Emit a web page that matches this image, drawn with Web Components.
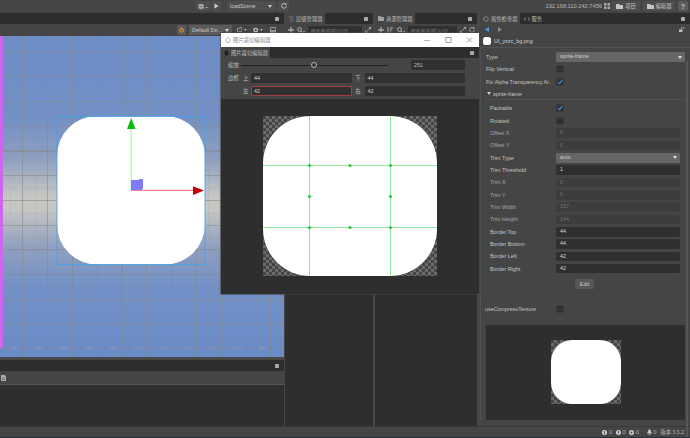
<!DOCTYPE html>
<html>
<head>
<meta charset="utf-8">
<title>Editor</title>
<style>
    html, body { margin: 0; height: 100%; overflow: hidden; background: #454545; }
    body { font: 5.4px "Liberation Sans", "Noto Sans CJK SC", sans-serif; color: #c8c8c8; }
</style>
</head>
<body>
<editor-app></editor-app>

<script>
const CJK = '"Noto Sans CJK SC", "Liberation Sans", sans-serif';
const MENU_DOT = `<span style="display:block;width:4px;height:4px;background:#a8a8a8;border-radius:.5px"></span>`;

// tab strip with the little panel menu square at the right
class PanelTabs extends HTMLElement {
    constructor() {
        super();
        this.attachShadow({ mode: 'open' });
    }
    connectedCallback() {
        this.shadowRoot.innerHTML = `
            <style>
                :host { display: flex; height: 11px; background: #2d2d2d; align-items: stretch; flex: none; }
                .tabs { display: flex; flex: 1; gap: 1px; min-width: 0; }
                .menu { width: 15px; display: flex; align-items: center; justify-content: center; }
            </style>
            <div class="tabs"><slot></slot></div>
            <div class="menu">${MENU_DOT}</div>
        `;
    }
}

class PanelTab extends HTMLElement {
    constructor() {
        super();
        this.attachShadow({ mode: 'open' });
    }
    connectedCallback() {
        this.shadowRoot.innerHTML = `
            <style>
                :host {
                    display: flex; align-items: center; gap: 2px; padding: 0 2px 0 3px;
                    font: 5.3px ${CJK}; color: #bdbdbd; white-space: nowrap;
                }
                :host([active]) { background: #454545; }
                svg { width: 6px; height: 6px; flex: none; }
            </style>
            <slot name="icon"></slot><slot></slot>
        `;
    }
}

class ToolButton extends HTMLElement {
    constructor() {
        super();
        this.attachShadow({ mode: 'open' });
    }
    connectedCallback() {
        this.shadowRoot.innerHTML = `
            <style>
                :host {
                    display: inline-flex; align-items: center; justify-content: center; gap: 2px;
                    height: 10px; padding: 0 2px; box-sizing: border-box; border-radius: 1px;
                    background: #4e4e4e; color: #c4c4c4; white-space: nowrap; flex: none;
                }
                :host([flat]) { background: none; }
            </style>
            <slot></slot>
        `;
    }
}

class TopBar extends HTMLElement {
    constructor() {
        super();
        this.attachShadow({ mode: 'open' });
    }
    connectedCallback() {
        this.shadowRoot.innerHTML = `
            <style>
                :host { display: flex; align-items: center; height: 12px; padding-right: 2px; background: #454545; flex: none; }
                .play { display: flex; gap: 2px; margin-left: 196px; align-items: center; }
                .scene { width: 49px; justify-content: space-between; padding: 0 4px 0 3px; }
                .addr { margin-left: auto; color: #b8b8b8; font-size: 5.7px; }
                .qr { margin: 0 2px 0 2px; }
                .cjk { font: 5.3px ${CJK}; }
                .b1 { width: 28px; }
                .b2 { width: 32px; margin-left: 3px; }
                .help { width: 10px; height: 10px; margin-left: 3px; padding: 0; border-radius: 2px; background: #5c5c5c; font-weight: bold; font-size: 7px; }
            </style>
            <div class="play">
                <tool-button style="width:14px">
                    <svg width="11" height="7" viewBox="0 0 11 7"><circle cx="3.5" cy="3.5" r="3" fill="#b5b5b5"/><path d="M.5 3.5h6M3.5.5v6" stroke="#666" stroke-width=".6"/><path d="M8 4h3L9.500 5.500z" fill="#c4c4c4"/></svg>
                </tool-button>
                <tool-button style="width:9px">
                    <svg width="5" height="6" viewBox="0 0 5 6"><path d="M0.500 0.500 4.500 3 0.500 5.500z" fill="#d0d0d0"/></svg>
                </tool-button>
                <span style="width:2px"></span>
                <tool-button class="scene">
                    <span>loadScene</span>
                    <svg width="4" height="3" viewBox="0 0 4 3"><path d="M0 0h4L2 3z" fill="#ccc"/></svg>
                </tool-button>
                <tool-button style="width:11px">
                    <svg width="6" height="6" viewBox="0 0 6 6"><path d="M5 1.500A2.400 2.400 0 1 0 5.400 3" fill="none" stroke="#c8c8c8" stroke-width=".9"/><path d="M5.500 0v2h-2z" fill="#c8c8c8"/></svg>
                </tool-button>
            </div>
            <span class="addr">192.168.110.242:7456</span>
            <svg class="qr" width="6" height="6" viewBox="0 0 6 6"><path d="M0 0h2.500v2.500H0zM3.500 0H6v2.500H3.500zM0 3.500h2.500V6H0zM3.500 3.500H6V6H3.500z" fill="#aaa"/></svg>
            <tool-button class="b1">
                <svg width="7" height="5" viewBox="0 0 7 5"><path d="M0 0h3l1 1h3v4H0z" fill="#c4c4c4"/></svg>
                <span class="cjk">项目</span>
            </tool-button>
            <tool-button class="b2">
                <svg width="7" height="5" viewBox="0 0 7 5"><path d="M0 0h3l1 1h3v4H0z" fill="#c4c4c4"/></svg>
                <span class="cjk">编辑器</span>
            </tool-button>
            <tool-button class="help">?</tool-button>
        `;
    }
}

// the viewport with grid, sprite and transform gizmo
class SceneView extends HTMLElement {
    constructor() {
        super();
        this.attachShadow({ mode: 'open' });
    }
    connectedCallback() {
        const marks = ['500', '600', '800', '900', '1000', '1100', '1200', '1300', '1400', '1500', '1600'];
        this.shadowRoot.innerHTML = `
            <style>
                :host { display: block; position: relative; flex: 1; overflow: hidden; background: linear-gradient(#6d8dc8 0%, #7290c6 25%, #8d9fc0 38%, #c6c6c3 50%, #c6c6c3 54%, #8f9fbf 66%, #7391c7 78%, #698bc8 100%); }
                .grid { position: absolute; inset: 0; background:
                    repeating-linear-gradient(90deg, transparent 0 22.500px, rgba(135,135,135,.5) 22.500px 23.500px, transparent 23.500px 24.750px),
                    repeating-linear-gradient(180deg, transparent 0 15.500px, rgba(135,135,135,.5) 15.500px 16.500px, transparent 16.500px 24.750px),
                    repeating-linear-gradient(90deg, transparent 0 10.100px, rgba(140,140,140,.12) 10.100px 11.100px, transparent 11.100px 12.375px),
                    repeating-linear-gradient(180deg, transparent 0 3.300px, rgba(140,140,140,.12) 3.300px 4.300px, transparent 4.300px 12.375px); }
                .edge { position: absolute; left: 0; top: 0; width: 3px; height: 312px; background: #cf66f0; }
                .marks { position: absolute; left: 2px; top: 310px; display: flex; font-size: 3.800px; color: #93a0bb; }
                .marks span { width: 24.750px; text-align: center; }
                svg { position: absolute; left: 0; top: 0; }
            </style>
            <div class="grid"></div>
            <div class="edge"></div>
            <div class="marks">${marks.map(m => `<span>${m}</span>`).join('')}</div>
            <svg width="284" height="321" viewBox="0 36 284 321">
                <rect x="57" y="116" width="148" height="148.500" rx="40" fill="#fff"/>
                <rect x="57" y="116.500" width="148" height="148" fill="none" stroke="#45a4ea" stroke-width=".9"/>
                <path d="M131.200 128V190" stroke="#9af09a" stroke-width="1"/>
                <path d="M131.200 118 135.500 129H127z" fill="#0cba0c"/>
                <path d="M131 190.300H194" stroke="#f26464" stroke-width="1"/>
                <path d="M204 190.500 193 186.200V195z" fill="#c00606"/>
                <path d="M131 180h8v-1h4v10h-1v1h-11z" fill="#7c7cf6"/>
            </svg>
        `;
    }
}

class ScenePanel extends HTMLElement {
    constructor() {
        super();
        this.attachShadow({ mode: 'open' });
    }
    connectedCallback() {
        this.shadowRoot.innerHTML = `
            <style>
                :host { display: flex; flex-direction: column; min-height: 0; }
                .tools { display: flex; align-items: center; justify-content: flex-end; height: 12px; padding-right: 8px; box-sizing: border-box; background: #454545; flex: none; }
                .sel { width: 43px; justify-content: space-between; padding: 0 3px; margin: 0 5px 0 3px; background: #5b5b5b; color: #c8c8c8; }
                .orange { width: 9px; background: #5a5a5a; }
                .log-tabs { margin-top: 3px; }
                .log-tools { height: 14px; background: #454545; border-bottom: 1px solid #555; box-sizing: border-box; display: flex; align-items: center; flex: none; }
                .log { height: 41px; background: #2e2e2e; flex: none; }
            </style>
            <panel-tabs></panel-tabs>
            <div class="tools">
                <tool-button class="orange">
                    <svg width="6" height="6" viewBox="0 0 6 6"><circle cx="3" cy="3.400" r="2.200" fill="none" stroke="#f09a2c" stroke-width="1.200"/><path d="M3 0v2.400" stroke="#f09a2c" stroke-width="1"/></svg>
                </tool-button>
                <tool-button class="sel">
                    <span>Default De...</span>
                    <svg width="4" height="3" viewBox="0 0 4 3"><path d="M0 0h4L2 3z" fill="#d0d0d0"/></svg>
                </tool-button>
                <tool-button flat style="width:10px;padding:0;margin-right:6px">
                    <svg width="6" height="6" viewBox="0 0 6 6"><path d="M.5 1.500h2l.5-1h2.500v4.500H.5z" fill="none" stroke="#bbb" stroke-width=".8"/></svg>
                    <svg width="3" height="2" viewBox="0 0 3 2"><path d="M0 0h3L1.500 2z" fill="#bbb"/></svg>
                </tool-button>
                <tool-button flat style="width:10px;padding:0;margin-right:7px">
                    <svg width="6" height="6" viewBox="0 0 6 6"><circle cx="3" cy="3" r="2" fill="none" stroke="#d0d0d0" stroke-width="1.300"/></svg>
                    <svg width="3" height="2" viewBox="0 0 3 2"><path d="M0 0h3L1.500 2z" fill="#bbb"/></svg>
                </tool-button>
                <tool-button flat style="width:6px;padding:0">
                    <svg width="6" height="6" viewBox="0 0 6 6"><rect width="6" height="6" rx="1" fill="#9a9a9a"/><rect x="1" y="1" width="4" height="2" fill="#454545"/></svg>
                </tool-button>
            </div>
            <scene-view></scene-view>
            <panel-tabs class="log-tabs"></panel-tabs>
            <div class="log-tools">
                <svg width="5" height="6" viewBox="0 0 5 6" style="margin-left:1px"><path d="M0 0h3.500L5 1.500V6H0z" fill="#b0b0b0"/><path d="M1 3h3M1 4.500h3" stroke="#555" stroke-width=".6"/></svg>
            </div>
            <div class="log"></div>
        `;
    }
}

// hierarchy and assets column: tabs, a toolbar with search, an empty list
class ListPanel extends HTMLElement {
    constructor() {
        super();
        this.attachShadow({ mode: 'open' });
    }
    connectedCallback() {
        this.shadowRoot.innerHTML = `
            <style>
                :host { display: flex; flex-direction: column; min-height: 0; }
                .tools { display: flex; align-items: center; height: 12px; gap: 3px; padding: 0 2px 0 3px; background: #454545; box-sizing: border-box; flex: none; color: #c8c8c8; }
                .list { flex: 1; background: #2e2e2e; }
            </style>
            <panel-tabs><slot name="tab"></slot></panel-tabs>
            <div class="tools"><slot name="tools"></slot></div>
            <div class="list"></div>
        `;
    }
}

class CheckMark extends HTMLElement {
    constructor() {
        super();
        this.attachShadow({ mode: 'open' });
    }
    connectedCallback() {
        this.shadowRoot.innerHTML = `
            <style>
                :host { display: block; width: 6px; height: 6px; border-radius: 1.500px; background: #303030; border: .5px solid #3a3a3a; flex: none; position: relative; }
                svg { position: absolute; left: 0; top: 0; }
            </style>
            ${this.hasAttribute('on') ? `<svg width="6" height="6" viewBox="0 0 6 6"><path d="M1 3.200 2.500 4.700 5.300 1" fill="none" stroke="#3d8ee8" stroke-width="1.200"/></svg>` : ''}
        `;
    }
}

// inspector row: label on the left, a field, select or checkbox on the right
class PropRow extends HTMLElement {
    constructor() {
        super();
        this.attachShadow({ mode: 'open' });
    }
    connectedCallback() {
        const kind = this.getAttribute('kind');
        const value = this.getAttribute('value') || '';
        let control = `<span class="box ${kind}">${value}</span>`;
        if (kind === 'check') {
            control = `<check-mark ${value ? 'on' : ''}></check-mark>`;
        } else if (kind === 'select') {
            control = `<span class="box select"><span>${value}</span><svg width="4" height="3" viewBox="0 0 4 3"><path d="M0 0h4L2 3z" fill="#e0e0e0"/></svg></span>`;
        }
        this.shadowRoot.innerHTML = `
            <style>
                :host { display: flex; align-items: center; height: 12.330px; }
                .label { width: var(--label-w, 70px); flex: none; white-space: nowrap; overflow: hidden; color: #c4c4c4; }
                :host([kind="off"]) .label { color: #a8a8a8; }
                .box { flex: 1; height: 9.500px; line-height: 9.500px; padding: 0 4px; border-radius: 1.500px; box-sizing: border-box; }
                .on { background: #2f2f2f; color: #d8d8d8; }
                .off { background: #3d3d3d; color: #757575; }
                .select { background: #666; color: #cfcfcf; display: flex; justify-content: space-between; align-items: center; padding-right: 3px; }
            </style>
            <span class="label"><slot></slot></span>
            ${control}
        `;
    }
}

class InspectorPanel extends HTMLElement {
    constructor() {
        super();
        this.attachShadow({ mode: 'open' });
    }
    connectedCallback() {
        this.shadowRoot.innerHTML = `
            <style>
                :host { display: flex; flex-direction: column; min-height: 0; background: #454545; position: relative; }
                .nav { display: flex; align-items: center; height: 11px; padding: 0 5px 0 5px; gap: 9px; flex: none; }
                .file { display: flex; align-items: center; gap: 3px; height: 12px; padding-left: 3px; flex: none; color: #d0d0d0; }
                .thumb { width: 8px; height: 8px; background: #fff; border-radius: 2.500px; }
                .body { border-left: 1px solid #525252; border-top: 1px solid #525252; padding: 3px 5px 0 5px; flex: none; }
                .group-head { display: flex; align-items: center; gap: 2px; height: 12.330px; padding-left: 1px; border-bottom: .5px solid #505050; box-sizing: border-box; }
                .group { --label-w: 66px; padding: 2px 5px 0 4px; }
                .edit { display: flex; justify-content: center; padding: 4.500px 0 0 0; margin-left: -1px; }
                .edit span { width: 19px; height: 10px; line-height: 10px; text-align: center; background: #575757; border-radius: 1px; color: #c8c8c8; }
                .compress { margin-top: 13px; margin-left: -1px; --label-w: 71px; }
                .preview { margin: 10px 0 0 0; height: 95px; background: #2e2e2e; display: flex; align-items: center; justify-content: center; }
                .bar { position: absolute; right: 2px; top: 48px; width: 2px; height: 376px; background: #565656; }
            </style>
            <panel-tabs>
                <panel-tab active>
                    <svg slot="icon" width="6" height="6" viewBox="0 0 6 6"><circle cx="3" cy="3" r="2.300" fill="none" stroke="#8d8d8d" stroke-width=".9"/></svg>
                    属性检查器
                </panel-tab>
                <panel-tab>
                    <svg slot="icon" width="6" height="6" viewBox="0 0 6 6"><path d="M0 3 2 1.500M0 3 2 4.500M6 3 4 1.500M6 3 4 4.500" stroke="#8d8d8d" stroke-width=".8"/></svg>
                    服务
                </panel-tab>
            </panel-tabs>
            <div class="nav">
                <svg width="4" height="5" viewBox="0 0 4 5"><path d="M4 0v5L0 2.500z" fill="#4d9be8"/></svg>
                <svg width="4" height="5" viewBox="0 0 4 5"><path d="M0 0v5l4-2.500z" fill="#8a8a8a"/></svg>
                <svg style="margin-left:auto" width="6" height="5" viewBox="0 0 6 5"><path d="M0 2.500h3.500V5H0z" fill="#bdbdbd"/><path d="M2.500 2.500V1.200a1.200 1.200 0 0 1 2.400 0V2" fill="none" stroke="#bdbdbd" stroke-width=".8"/></svg>
            </div>
            <div class="file"><span class="thumb"></span><span>UI_yszc_bg.png</span></div>
            <div class="body">
                <prop-row kind="select" value="sprite-frame">Type</prop-row>
                <prop-row kind="check">Flip Vertical</prop-row>
                <prop-row kind="check" value="1">Fix Alpha Transparency Ar...</prop-row>
                <div class="group-head">
                    <svg width="4" height="3" viewBox="0 0 4 3"><path d="M0 0h4L2 3z" fill="#ccc"/></svg>
                    <span>sprite-frame</span>
                </div>
                <div class="group">
                    <prop-row kind="check" value="1">Packable</prop-row>
                    <prop-row kind="check">Rotated</prop-row>
                    <prop-row kind="off" value="0">Offset X</prop-row>
                    <prop-row kind="off" value="0">Offset Y</prop-row>
                    <prop-row kind="select" value="auto">Trim Type</prop-row>
                    <prop-row kind="on" value="1">Trim Threshold</prop-row>
                    <prop-row kind="off" value="0">Trim X</prop-row>
                    <prop-row kind="off" value="0">Trim Y</prop-row>
                    <prop-row kind="off" value="157">Trim Width</prop-row>
                    <prop-row kind="off" value="144">Trim Height</prop-row>
                    <prop-row kind="on" value="44">Border Top</prop-row>
                    <prop-row kind="on" value="44">Border Bottom</prop-row>
                    <prop-row kind="on" value="42">Border Left</prop-row>
                    <prop-row kind="on" value="42">Border Right</prop-row>
                    <div class="edit"><span>Edit</span></div>
                </div>
                <prop-row class="compress" kind="check">useCompressTexture</prop-row>
                <div class="preview"><sprite-thumb style="--w:70px;--h:64.500px;--r:21px"></sprite-thumb></div>
            </div>
            <div class="bar"></div>
        `;
    }
}

class SpriteThumb extends HTMLElement {
    constructor() {
        super();
        this.attachShadow({ mode: 'open' });
    }
    connectedCallback() {
        this.shadowRoot.innerHTML = `
            <style>
                :host {
                    display: block; position: relative; width: var(--w); height: var(--h); flex: none;
                    background: repeating-conic-gradient(#6b6b6b 0 25%, #454545 0 50%) 0 0 / 6px 6px;
                }
                .img { position: absolute; inset: 0; background: #fff; border-radius: var(--r); box-shadow: 0 0 1px #222; }
            </style>
            <div class="img"></div>
            <slot></slot>
        `;
    }
}

// nine-slice guides drawn over the sprite in the editor window
class SliceGuides extends HTMLElement {
    constructor() {
        super();
        this.attachShadow({ mode: 'open' });
    }
    connectedCallback() {
        const dots = [[46.500, 49.500], [87, 49.500], [127.500, 49.500], [46.500, 80.500], [127.500, 80.500], [46.500, 111.500], [87, 111.500], [127.500, 111.500]];
        this.shadowRoot.innerHTML = `
            <style>
                :host { position: absolute; inset: 0; display: block; }
            </style>
            <svg width="174" height="160" viewBox="0 0 174 160">
                <path d="M46.500 0V160M127.500 0V160M0 49.500H174M0 111.500H174" stroke="#93e8a0" stroke-width="1"/>
                ${dots.map(d => `<circle cx="${d[0]}" cy="${d[1]}" r="1.600" fill="#2cc83c"/>`).join('')}
            </svg>
        `;
    }
}

class SliceField extends HTMLElement {
    constructor() {
        super();
        this.attachShadow({ mode: 'open' });
    }
    connectedCallback() {
        this.shadowRoot.innerHTML = `
            <style>
                :host {
                    display: block; flex: 1; min-width: 0; height: 10px; line-height: 10px; box-sizing: border-box;
                    padding-left: 3px; background: #303030; border-radius: 1px; color: #d4d4d4;
                }
                :host([error]) { box-shadow: inset 0 0 0 1px #a23f3f; }
            </style>
            <slot></slot>
        `;
    }
}

class SliceEditor extends HTMLElement {
    constructor() {
        super();
        this.attachShadow({ mode: 'open' });
    }
    connectedCallback() {
        this.shadowRoot.innerHTML = `
            <style>
                :host {
                    position: absolute; left: 221px; top: 33px; width: 258px; height: 261px;
                    display: flex; flex-direction: column; background: #2e2e2e;
                    box-shadow: 0 0 0 .5px #555, 0 0 2px rgba(0,0,0,.5);
                }
                .title { display: flex; align-items: center; height: 14px; background: #fff; padding-left: 4px; gap: 2px; font: 5.400px ${CJK}; color: #8a8a8a; flex: none; }
                .win { margin-left: auto; display: flex; }
                .win svg { width: 20px; height: 14px; display: block; }
                .form { background: #454545; height: 41px; padding: 2px 14px 0 7px; box-sizing: border-box; display: flex; flex-direction: column; gap: 3px; flex: none; }
                .row { display: flex; align-items: center; height: 10px; font: 5.400px ${CJK}; color: #bdbdbd; }
                .cap { width: 15px; flex: none; }
                .side { width: 8px; flex: none; }
                .side-r { width: 13px; flex: none; text-align: center; }
                .slider { width: 147px; height: 1px; background: #222; position: relative; margin: 0 23px 0 -2px; flex: none; }
                .thumb { position: absolute; left: 70px; top: -2.500px; width: 6px; height: 6px; border: 1px solid #b8b8b8; background: #333; border-radius: 50%; box-sizing: border-box; }
                .preview { flex: 1; display: flex; justify-content: center; padding-top: 17px; padding-right: 1px; }
                .n { font-family: "Liberation Sans", sans-serif; }
            </style>
            <div class="title">
                <svg width="6" height="6" viewBox="0 0 6 6"><path d="M3 .5 5 2.500A2.200 2.200 0 1 1 1 2.500z" fill="none" stroke="#8a8a8a" stroke-width=".7"/></svg>
                <span>图片裁切编辑器</span>
                <div class="win">
                    <svg viewBox="0 0 20 14"><path d="M5 7.500H11" stroke="#999" stroke-width=".7"/></svg>
                    <svg viewBox="0 0 20 14"><rect x="7" y="4.500" width="5" height="5" fill="none" stroke="#777" stroke-width=".7"/></svg>
                    <svg viewBox="0 0 20 14"><path d="M8 4.500 13 9.500M13 4.500 8 9.500" stroke="#777" stroke-width=".7"/></svg>
                </div>
            </div>
            <panel-tabs>
                <panel-tab active>
                    <svg slot="icon" width="5" height="6" viewBox="0 0 5 6"><path d="M0 0h3.500L5 1.500V6H0z" fill="#1e1e1e" stroke="#aaa" stroke-width=".4"/></svg>
                    图片裁切编辑器
                </panel-tab>
            </panel-tabs>
            <div class="form">
                <div class="row">
                    <span class="cap">缩放</span>
                    <div class="slider"><div class="thumb"></div></div>
                    <slice-field class="n" style="flex:none;width:54px;color:#bbb">251</slice-field>
                </div>
                <div class="row">
                    <span class="cap">边框</span>
                    <span class="side">上</span>
                    <slice-field class="n">44</slice-field>
                    <span class="side-r">下</span>
                    <slice-field class="n">44</slice-field>
                </div>
                <div class="row">
                    <span class="cap"></span>
                    <span class="side">左</span>
                    <slice-field class="n" error>42</slice-field>
                    <span class="side-r">右</span>
                    <slice-field class="n">42</slice-field>
                </div>
            </div>
            <div class="preview">
                <sprite-thumb style="--w:174px;--h:160px;--r:47px"><slice-guides></slice-guides></sprite-thumb>
            </div>
        `;
    }
}

class EditorApp extends HTMLElement {
    constructor() {
        super();
        this.attachShadow({ mode: 'open' });
    }
    connectedCallback() {
        const plus = `<svg width="6" height="6" viewBox="0 0 6 6"><path d="M3 0v6M0 3h6" stroke="#c8c8c8" stroke-width="1"/></svg>`;
        const lens = `<svg width="8" height="6" viewBox="0 0 8 6"><circle cx="2.500" cy="2.500" r="1.900" fill="none" stroke="#c0c0c0" stroke-width=".9"/><path d="M4 4 5.500 5.700" stroke="#c0c0c0"/><path d="M6 4h2L7 5.500z" fill="#bbb"/></svg>`;
        const expand = `<svg width="6" height="6" viewBox="0 0 6 6"><path d="M6 0v2.500L3.500 0zM0 6V3.500L2.500 6z" fill="#b5b5b5"/><path d="M4.500 1.500 1.500 4.500" stroke="#b5b5b5" stroke-width=".7"/></svg>`;
        const search = 'flex:1;min-width:0;height:9px;background:#303030;border-radius:1px;padding-left:2px;color:#7a7a7a;white-space:nowrap;overflow:hidden;font:italic 5px/9px ' + CJK.replace(/"/g, "'");
        this.shadowRoot.innerHTML = `
            <style>
                :host { display: flex; flex-direction: column; width: 690px; height: 438px; background: #454545; }
                .main { flex: 1; min-height: 0; margin-top: 1px; display: grid; grid-template-columns: 284px 88px 103px 212px; column-gap: 1px; background: #484848; }
                .main > :nth-child(3) { margin-left: 1px; }
                .main > :nth-child(4) { margin-left: 2px; }
                .status { flex: none; height: 12px; display: flex; align-items: center; justify-content: flex-end; gap: 4px; padding-right: 6px; background: #454545; color: #b8b8b8; border-top: 1px solid #3a3a3a; border-bottom: 1px solid #24303a; box-sizing: border-box; }
                .status span { display: inline-flex; align-items: center; gap: 1.500px; }
                .cjk { font: 5.300px ${CJK}; }
            </style>
            <top-bar></top-bar>
            <div class="main">
                <scene-panel></scene-panel>
                <list-panel>
                    <panel-tab slot="tab" active>
                        <svg slot="icon" width="6" height="6" viewBox="0 0 6 6"><path d="M.5 1h5M2 3h3.500M2 5h3.500" stroke="#8a8a8a" stroke-width=".7"/></svg>
                        层级管理器
                    </panel-tab>
                    <div slot="tools" style="display:flex;align-items:center;gap:3px;flex:1;min-width:0">
                        ${plus}${lens}
                        <div style="${search}">搜索名称或UUID</div>
                        ${expand}
                    </div>
                </list-panel>
                <list-panel>
                    <panel-tab slot="tab" active>
                        <svg slot="icon" width="6" height="5" viewBox="0 0 6 5"><path d="M0 0h2.500l1 1H6v4H0z" fill="#a0a0a0"/></svg>
                        资源管理器
                    </panel-tab>
                    <div slot="tools" style="display:flex;align-items:center;gap:3px;flex:1;min-width:0">
                        ${plus}
                        <svg width="7" height="6" viewBox="0 0 7 6"><path d="M1 0v6M3 1h3M3 3h2M3 5h1" stroke="#c0c0c0" stroke-width=".9"/></svg>
                        ${lens}
                        <div style="${search}">搜索名称或UUID</div>
                        ${expand}
                        <svg width="6" height="6" viewBox="0 0 6 6"><path d="M5 1.500A2.400 2.400 0 1 0 5.400 3" fill="none" stroke="#b5b5b5" stroke-width=".8"/><path d="M5.500 0v2h-2z" fill="#b5b5b5"/></svg>
                    </div>
                </list-panel>
                <inspector-panel></inspector-panel>
            </div>
            <div class="status">
                <span><svg width="5" height="5" viewBox="0 0 5 5"><circle cx="2.500" cy="2.500" r="2.500" fill="#cfcfcf"/><path d="M2.500 1v3" stroke="#444" stroke-width=".9"/></svg>0</span>
                <span><svg width="5" height="5" viewBox="0 0 5 5"><circle cx="2.500" cy="2.500" r="2.500" fill="#cfcfcf"/><path d="M2.500 1v2M2.500 3.500v.7" stroke="#444" stroke-width=".9"/></svg>0</span>
                <span><svg width="5" height="5" viewBox="0 0 5 5"><circle cx="2.500" cy="2.500" r="2.500" fill="#cfcfcf"/><circle cx="2.500" cy="2.500" r="1" fill="#444"/></svg>0</span>
                <span style="margin-left:4px">
                    <svg width="5" height="6" viewBox="0 0 5 6"><path d="M2.500 0C4 1 4 3 5 4.500H0C1 3 1 1 2.500 0zM1.800 5h1.400v1H1.800z" fill="#c8c8c8"/></svg>0
                </span>
                <span class="cjk">版本 3.5.2</span>
            </div>
            <slice-editor></slice-editor>
        `;
    }
}

customElements.define('panel-tabs', PanelTabs);
customElements.define('panel-tab', PanelTab);
customElements.define('tool-button', ToolButton);
customElements.define('top-bar', TopBar);
customElements.define('scene-view', SceneView);
customElements.define('scene-panel', ScenePanel);
customElements.define('list-panel', ListPanel);
customElements.define('check-mark', CheckMark);
customElements.define('prop-row', PropRow);
customElements.define('inspector-panel', InspectorPanel);
customElements.define('sprite-thumb', SpriteThumb);
customElements.define('slice-guides', SliceGuides);
customElements.define('slice-field', SliceField);
customElements.define('slice-editor', SliceEditor);
customElements.define('editor-app', EditorApp);
</script>
</body>
</html>
